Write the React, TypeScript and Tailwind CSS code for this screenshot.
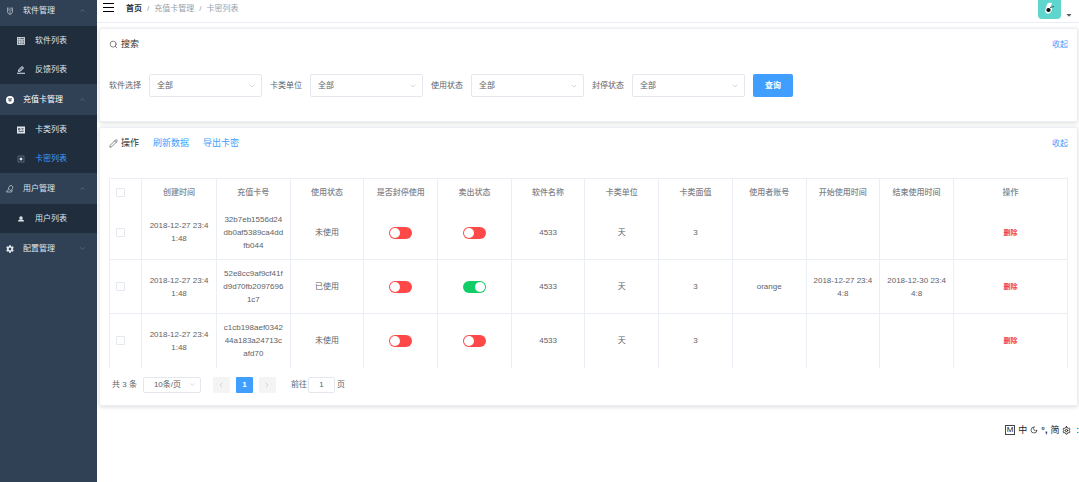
import { useState } from 'react'
import type { ReactNode } from 'react'
import { FaCaretDown, FaCog } from 'react-icons/fa'
import {
  LuChevronDown,
  LuChevronLeft,
  LuChevronRight,
  LuChevronUp,
  LuMoon,
  LuPencil,
  LuSearch,
  LuSettings,
} from 'react-icons/lu'

type MenuGroup = {
  title: string
  icon: ReactNode
  open: boolean
  active?: boolean
  items: { title: string; icon: ReactNode; active?: boolean }[]
}

type Card = {
  created: string
  code: string
  status: string
  banned: boolean
  sold: boolean
  user: string
  start: string
  end: string
}

const ShieldIcon = () => (
  <svg viewBox="0 0 16 16" className="size-2" fill="none" stroke="currentColor" strokeWidth="1.2">
    <path d="M3 1v7c0 4 2 6 5 7 3-1 5-3 5-7V1M6 1v6l2 2 2-2V1M6 12h4" />
  </svg>
)

const ListIcon = () => (
  <svg viewBox="0 0 16 16" className="size-2" fill="none" stroke="currentColor" strokeWidth="1.6">
    <rect x="1" y="1" width="14" height="14" fill="currentColor" fillOpacity="0.35" />
    <path d="M1 5.5h14M1 10h14M5.5 1v14M10 5v10" />
  </svg>
)

const EditIcon = () => (
  <svg viewBox="0 0 16 16" className="size-2" fill="none" stroke="currentColor" strokeWidth="2">
    <path d="M0 14.5h16" />
    <path d="M3 11l1-4 6-6 3 3-6 6z" fill="currentColor" fillOpacity="0.4" />
  </svg>
)

const RechargeIcon = () => (
  <svg viewBox="0 0 16 16" className="size-2">
    <circle cx="8" cy="8" r="8" fill="currentColor" />
    <path d="M4 5.5h8M4.5 8.5h7M8 6v6" stroke="#304156" strokeWidth="1.6" />
  </svg>
)

const CardIcon = () => (
  <svg viewBox="0 0 16 16" className="size-2">
    <rect y="1" width="16" height="14" fill="currentColor" />
    <path d="M3 5h3v3H3zM3 11h10M9 5h4M9 8h4" fill="none" stroke="#1f2d3d" strokeWidth="1.3" />
  </svg>
)

const KeyIcon = () => (
  <svg viewBox="0 0 16 16" className="size-2" fill="none" stroke="currentColor" strokeWidth="1">
    <rect x="2" y="2" width="12" height="12" strokeOpacity="0.6" />
    <circle cx="8" cy="8" r="2.5" fill="currentColor" />
  </svg>
)

const UserIcon = () => (
  <svg viewBox="0 0 16 16" className="size-2" fill="none" stroke="currentColor" strokeWidth="1.3">
    <path d="M5 8c0-4 2-7 5-7s4 3 3 6-4 5-6 3M7 9c-3 0-5 2-6 5h10l2-4" />
  </svg>
)

const PersonIcon = () => (
  <svg viewBox="0 0 16 16" className="size-2" fill="currentColor">
    <circle cx="8" cy="6" r="3.5" />
    <path d="M2 13c0-3 2-4 6-4s6 1 6 4z" />
  </svg>
)

const menu: MenuGroup[] = [
  {
    title: '软件管理',
    icon: <ShieldIcon />,
    open: true,
    items: [
      { title: '软件列表', icon: <ListIcon /> },
      { title: '反馈列表', icon: <EditIcon /> },
    ],
  },
  {
    title: '充值卡管理',
    icon: <RechargeIcon />,
    open: true,
    active: true,
    items: [
      { title: '卡类列表', icon: <CardIcon /> },
      { title: '卡密列表', icon: <KeyIcon />, active: true },
    ],
  },
  {
    title: '用户管理',
    icon: <UserIcon />,
    open: true,
    items: [{ title: '用户列表', icon: <PersonIcon /> }],
  },
  { title: '配置管理', icon: <FaCog size={8} />, open: false, items: [] },
]

const filters = ['软件选择', '卡类单位', '使用状态', '封停状态']

const columns = [
  '创建时间',
  '充值卡号',
  '使用状态',
  '是否封停使用',
  '卖出状态',
  '软件名称',
  '卡类单位',
  '卡类面值',
  '使用者账号',
  '开始使用时间',
  '结束使用时间',
  '操作',
]

const cards: Card[] = [
  {
    created: '2018-12-27 23:41:48',
    code: '32b7eb1556d24db0af5389ca4ddfb044',
    status: '未使用',
    banned: false,
    sold: false,
    user: '',
    start: '',
    end: '',
  },
  {
    created: '2018-12-27 23:41:48',
    code: '52e8cc9af9cf41fd9d70fb20976961c7',
    status: '已使用',
    banned: false,
    sold: true,
    user: 'orange',
    start: '2018-12-27 23:44:8',
    end: '2018-12-30 23:44:8',
  },
  {
    created: '2018-12-27 23:41:48',
    code: 'c1cb198aef034244a183a24713cafd70',
    status: '未使用',
    banned: false,
    sold: false,
    user: '',
    start: '',
    end: '',
  },
]

const Sidebar = () => (
  <nav className="w-[97px] shrink-0 overflow-hidden bg-[#304156] text-[#dfe4ea]">
    <ul className="-mt-[5px]">
      {menu.map((group) => (
        <li key={group.title}>
          <button
            className={`flex h-[31px] w-full items-center pr-[11px] pl-[6px] ${group.active ? 'text-white' : ''}`}
          >
            {group.icon}
            <span className="ml-[9px] flex-1 text-left">{group.title}</span>
            <span className="text-[#6f7d8e]">
              {group.open ? <LuChevronUp size={7} /> : <LuChevronDown size={7} />}
            </span>
          </button>
          <ul className="bg-[#1f2d3d]">
            {group.items.map((item) => (
              <li key={item.title}>
                <a
                  href="#"
                  className={`flex h-[29px] items-center gap-[10px] pl-[17px] ${item.active ? 'text-[#409eff]' : ''}`}
                >
                  <span className="text-[#dfe4ea]">{item.icon}</span>
                  {item.title}
                </a>
              </li>
            ))}
          </ul>
        </li>
      ))}
    </ul>
  </nav>
)

const Header = () => (
  <header className="flex h-[23px] items-start justify-between border-b border-[#ebeef5] pl-[6px]">
    <div className="flex h-4 items-center">
      <button aria-label="菜单" className="flex flex-col gap-[3px] pb-[1px]">
        <span className="h-px w-[11px] bg-black" />
        <span className="h-px w-[11px] bg-black" />
        <span className="h-px w-[11px] bg-black" />
      </button>
      <div className="ml-3 flex gap-[5px] text-[#999ea8]">
        <a href="#" className="font-bold text-[#303133]">
          首页
        </a>
        <span>/</span>
        <span>充值卡管理</span>
        <span>/</span>
        <span>卡密列表</span>
      </div>
    </div>
    <button aria-label="用户" className="flex items-end gap-1 pr-[6px]">
      <svg viewBox="0 0 23 19" className="h-[19px] w-[23px]">
        <path d="M0 0h23v15q0 4-4 4H4q-4 0-4-4z" fill="#5fd6cd" />
        <path d="M9 4q2-2 5-1l-1 3q2 3 0 6t-5 1q-2-2 0-5z" fill="#fff" />
        <ellipse cx="10.5" cy="10" rx="2.2" ry="2" fill="#111" />
        <path d="M12 7.5l4-1" stroke="#3b5a5a" />
      </svg>
      <FaCaretDown size={8} className="text-[#5a5e66]" />
    </button>
  </header>
)

const Panel = ({
  icon,
  title,
  actions,
  children,
}: {
  icon: ReactNode
  title: string
  actions?: string[]
  children: ReactNode
}) => (
  <section className="mt-[5px] mr-px ml-[2px] rounded-[2px] border border-[#ebeef5] px-[9px] shadow-[0_1px_4px_rgba(0,0,0,0.14)]">
    <div className="flex h-[31px] items-center justify-between">
      <div className="flex items-center text-[9px] text-[#303133]">
        {icon}
        <h2 className="ml-[3px]">{title}</h2>
        {actions?.map((action) => (
          <button key={action} className="ml-[14px] text-[#409eff]">
            {action}
          </button>
        ))}
      </div>
      <button className="text-[#409eff]">收起</button>
    </div>
    {children}
  </section>
)

const Filters = () => (
  <form className="flex items-center gap-2 pt-[14px] pb-6">
    {filters.map((name) => (
      <label key={name} className="flex items-center gap-2 text-[#606266]">
        {name}
        <span className="grid w-[113px] items-center">
          <select className="col-start-1 row-start-1 h-[23px] appearance-none rounded-[2px] border border-[#e4e7ed] bg-white pl-[7px] text-[#606266]">
            <option>全部</option>
          </select>
          <LuChevronDown
            size={8}
            className="pointer-events-none col-start-1 row-start-1 mr-[6px] justify-self-end text-[#c0c4cc]"
          />
        </span>
      </label>
    ))}
    <button type="button" className="h-[23px] w-10 rounded-[2px] bg-[#409eff] font-bold text-white">
      查询
    </button>
  </form>
)

const Switch = ({ label, value }: { label: string; value: boolean }) => {
  const [on, setOn] = useState(value)

  return (
    <button
      role="switch"
      aria-checked={on}
      aria-label={label}
      onClick={() => setOn(!on)}
      className={`inline-flex h-3 w-[23px] items-center rounded-full px-px align-middle ${on ? 'justify-end bg-[#13ce66]' : 'bg-[#ff4949]'}`}
    >
      <span className="size-[10px] rounded-full bg-white" />
    </button>
  )
}

const Checkbox = ({ label }: { label: string }) => (
  <input
    type="checkbox"
    aria-label={label}
    className="block size-[9px] appearance-none rounded-[1px] border border-[#e4e7ed] bg-white checked:bg-[#409eff]"
  />
)

const CardTable = () => (
  <table className="w-full table-fixed border-x border-t border-[#ebeef5] text-center text-[#606266]">
    <colgroup>
      <col className="w-8" />
      <col className="w-[75px]" />
      <col span={10} />
      <col className="w-[114px]" />
    </colgroup>
    <thead className="text-[#808389]">
      <tr className="h-[27px]">
        <th className="border-r border-[#ebeef5] px-[6px]">
          <Checkbox label="全选" />
        </th>
        {columns.map((name) => (
          <th key={name} className="border-r border-[#ebeef5] font-medium">
            {name}
          </th>
        ))}
      </tr>
    </thead>
    <tbody className="[&_td]:border-r [&_td]:border-[#ebeef5] [&_td]:px-[6px] [&_td]:break-all">
      {cards.map((card, i) => (
        <tr key={card.code} className="h-[54px] border-b border-[#ebeef5] last:border-b-0">
          <td>
            <Checkbox label={card.code} />
          </td>
          <td>{card.created}</td>
          <td>{card.code}</td>
          <td>{card.status}</td>
          <td>
            <Switch label={`是否封停使用 ${i + 1}`} value={card.banned} />
          </td>
          <td>
            <Switch label={`卖出状态 ${i + 1}`} value={card.sold} />
          </td>
          <td>4533</td>
          <td>天</td>
          <td>3</td>
          <td>{card.user}</td>
          <td>{card.start}</td>
          <td>{card.end}</td>
          <td>
            <button className="text-[7px] font-bold text-[#f04040]">删除</button>
          </td>
        </tr>
      ))}
    </tbody>
  </table>
)

const Pagination = () => (
  <div className="flex items-center pt-[9px] pb-3 pl-[3px] text-[#606266]">
    <span>共 3 条</span>
    <span className="ml-[6px] grid w-[58px] items-center">
      <select
        aria-label="每页条数"
        className="col-start-1 row-start-1 h-4 appearance-none rounded-[2px] border border-[#e4e7ed] bg-white pl-[10px]"
      >
        <option>10条/页</option>
      </select>
      <LuChevronDown
        size={7}
        className="pointer-events-none col-start-1 row-start-1 mr-[5px] justify-self-end text-[#c0c4cc]"
      />
    </span>
    <div className="ml-3 flex gap-[6px]">
      <button aria-label="上一页" className="grid h-4 w-[17px] place-items-center rounded-[1px] bg-[#f4f4f5] text-[#c0c4cc]">
        <LuChevronLeft size={8} />
      </button>
      <button className="h-4 w-[17px] rounded-[1px] bg-[#409eff] font-bold text-white">1</button>
      <button aria-label="下一页" className="grid h-4 w-[17px] place-items-center rounded-[1px] bg-[#f4f4f5] text-[#c0c4cc]">
        <LuChevronRight size={8} />
      </button>
    </div>
    <label className="ml-[15px] flex items-center gap-px">
      前往
      <input
        defaultValue="1"
        className="mr-px h-4 w-[27px] rounded-[2px] border border-[#e4e7ed] text-center"
      />
      页
    </label>
  </div>
)

// input method status bar floating over the page
const ImeBar = () => (
  <div className="absolute top-[424px] right-0 flex h-3 items-center gap-[3px] text-[9px] text-[#222]">
    <span className="border border-[#444] px-px text-[8px] leading-[8px]">M</span>
    <span>中</span>
    <LuMoon size={8} />
    <span className="font-bold">°,</span>
    <span>简</span>
    <LuSettings size={9} strokeWidth={2.5} />
    <span className="ml-[2px]">:</span>
  </div>
)

export default function App() {
  return (
    <div className="relative flex min-h-screen bg-white font-['Liberation_Sans','Noto_Sans_CJK_SC',sans-serif] text-[8px] leading-[13px] text-[#303133]">
      <Sidebar />
      <main className="min-w-0 flex-1">
        <Header />
        <Panel icon={<LuSearch size={9} strokeWidth={1.5} />} title="搜索">
          <Filters />
        </Panel>
        <Panel
          icon={<LuPencil size={9} strokeWidth={1.5} />}
          title="操作"
          actions={['刷新数据', '导出卡密']}
        >
          <div className="pt-[19px]">
            <CardTable />
            <Pagination />
          </div>
        </Panel>
      </main>
      <ImeBar />
    </div>
  )
}
